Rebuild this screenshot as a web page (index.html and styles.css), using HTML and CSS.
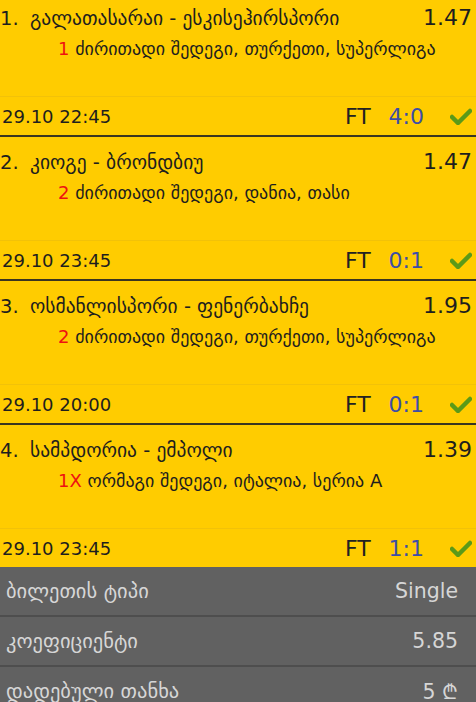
FILE: index.html
```html
<!DOCTYPE html>
<html lang="ka">
<head>
    <meta charset="UTF-8">
    <meta name="viewport" content="width=device-width, initial-scale=1.0">
    <title>ბილეთი</title>
    <link rel="stylesheet" href="styles.css">
</head>
<body>
    <div id="ticket">
        <div class="bet">
            <div class="bet-top">
                <div class="bet-title">
                    <span class="num">1.</span>
                    <span class="teams">გალათასარაი - ესკისეჰირსპორი</span>
                    <span class="odd">1.47</span>
                </div>
                <div class="bet-desc"><span class="pick">1</span> ძირითადი შედეგი, თურქეთი, სუპერლიგა</div>
            </div>
            <div class="bet-foot">
                <span class="date">29.10 22:45</span>
                <span class="status">FT</span>
                <span class="score">4:0</span>
                <span class="check"><svg width="22" height="17" viewBox="0 0 22 17"><path d="M2 9 L8 15 L20 3" fill="none" stroke="#5b9a18" stroke-width="4.5" stroke-linecap="round" stroke-linejoin="round"/></svg></span>
            </div>
        </div>

        <div class="bet">
            <div class="bet-top">
                <div class="bet-title">
                    <span class="num">2.</span>
                    <span class="teams">კიოგე - ბრონდბიუ</span>
                    <span class="odd">1.47</span>
                </div>
                <div class="bet-desc"><span class="pick">2</span> ძირითადი შედეგი, დანია, თასი</div>
            </div>
            <div class="bet-foot">
                <span class="date">29.10 23:45</span>
                <span class="status">FT</span>
                <span class="score">0:1</span>
                <span class="check"><svg width="22" height="17" viewBox="0 0 22 17"><path d="M2 9 L8 15 L20 3" fill="none" stroke="#5b9a18" stroke-width="4.5" stroke-linecap="round" stroke-linejoin="round"/></svg></span>
            </div>
        </div>

        <div class="bet">
            <div class="bet-top">
                <div class="bet-title">
                    <span class="num">3.</span>
                    <span class="teams">ოსმანლისპორი - ფენერბახჩე</span>
                    <span class="odd">1.95</span>
                </div>
                <div class="bet-desc"><span class="pick">2</span> ძირითადი შედეგი, თურქეთი, სუპერლიგა</div>
            </div>
            <div class="bet-foot">
                <span class="date">29.10 20:00</span>
                <span class="status">FT</span>
                <span class="score">0:1</span>
                <span class="check"><svg width="22" height="17" viewBox="0 0 22 17"><path d="M2 9 L8 15 L20 3" fill="none" stroke="#5b9a18" stroke-width="4.5" stroke-linecap="round" stroke-linejoin="round"/></svg></span>
            </div>
        </div>

        <div class="bet last">
            <div class="bet-top">
                <div class="bet-title">
                    <span class="num">4.</span>
                    <span class="teams">სამპდორია - ემპოლი</span>
                    <span class="odd">1.39</span>
                </div>
                <div class="bet-desc"><span class="pick">1X</span> ორმაგი შედეგი, იტალია, სერია A</div>
            </div>
            <div class="bet-foot">
                <span class="date">29.10 23:45</span>
                <span class="status">FT</span>
                <span class="score">1:1</span>
                <span class="check"><svg width="22" height="17" viewBox="0 0 22 17"><path d="M2 9 L8 15 L20 3" fill="none" stroke="#5b9a18" stroke-width="4.5" stroke-linecap="round" stroke-linejoin="round"/></svg></span>
            </div>
        </div>

        <div class="summary">
            <div class="sum-row">
                <span>ბილეთის ტიპი</span>
                <span>Single</span>
            </div>
            <div class="sum-row">
                <span>კოეფიციენტი</span>
                <span>5.85</span>
            </div>
            <div class="sum-row">
                <span>დადებული თანხა</span>
                <span>5 ₾</span>
            </div>
        </div>
    </div>
</body>
</html>
```

FILE: styles.css
```css
body {
    margin: 0;
    font-family: "DejaVu Sans", sans-serif;
    background-color: #616161;
    overflow: hidden;
}
#ticket {
    margin-top: -7px;
}
.bet {
    background-color: #ffcc00;
    color: #1e1e1e;
    border-bottom: 2px solid #3a3520;
}
.bet.last {
    border-bottom: none;
}
.bet-top {
    height: 104px;
    padding-top: 12px;
    border-bottom: 1px solid #f2c208;
    box-sizing: border-box;
}
.bet-title {
    display: flex;
    align-items: baseline;
    height: 26px;
}
.num {
    font-size: 19.5px;
    width: 30px;
}
.teams {
    font-size: 19.5px;
    flex: 1;
}
.odd {
    font-size: 22px;
    padding-right: 4px;
}
.bet-desc {
    font-size: 18px;
    padding-left: 58px;
    margin-top: 7px;
}
.pick {
    color: #ee1111;
}
.bet-foot {
    height: 38px;
    display: flex;
    align-items: center;
}
.date {
    font-size: 18px;
    padding-left: 2px;
    flex: 1;
}
.status {
    font-size: 22px;
    color: #222;
}
.score {
    font-size: 22px;
    color: #3d4ea6;
    margin-left: 18px;
}
.check {
    width: 52px;
    display: flex;
    justify-content: flex-end;
    padding-right: 4px;
    box-sizing: border-box;
}
.summary {
    background-color: #616161;
    color: #d6d6d6;
}
.sum-row {
    height: 50px;
    display: flex;
    justify-content: space-between;
    align-items: center;
    font-size: 20.5px;
    padding: 0 18px 0 6px;
    border-bottom: 2px solid #4e4e4e;
    box-sizing: border-box;
}
```
